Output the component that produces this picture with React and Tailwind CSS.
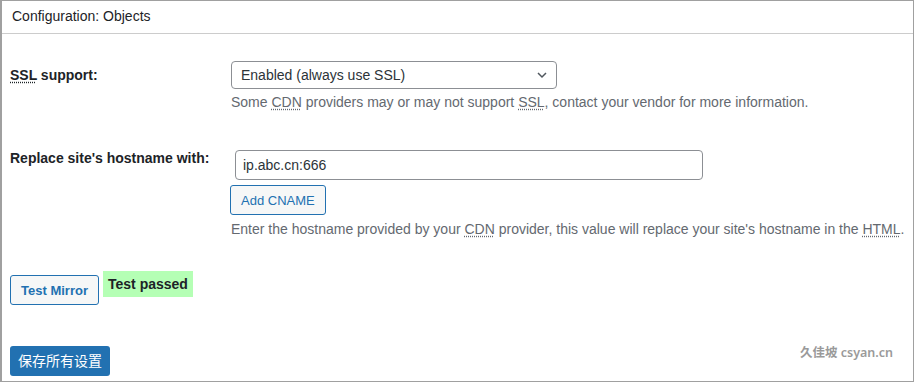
export default function App() {
  return (
    <div className="w-[914px] h-[382px] bg-white font-['Liberation_Sans','Noto_Sans_CJK_SC',sans-serif] text-[14px] leading-[21px] text-[#1d2327]">
      <div className="w-full h-full border border-[#a0a0a0] border-l-2 flex flex-col">
        <div className="h-[33px] shrink-0 border-b border-[#cccccc] pl-[10px] pt-[5px] text-[#1d2327]">
          Configuration: Objects
        </div>

        {/* SSL support */}
        <div className="flex mt-[27px]">
          <div className="w-[229px] pl-[8px] pt-[4px] font-bold">
            <abbr className="underline decoration-dotted underline-offset-2">SSL</abbr> support:
          </div>
          <div className="flex flex-col">
            <div className="w-[326px] h-[28px] border border-[#8c8f94] rounded-[4px] flex items-center justify-between pl-[9px] pr-[8px] text-[#2c3338]">
              <span>Enabled (always use SSL)</span>
              <svg width="12" height="12" viewBox="0 0 12 12" fill="none" stroke="#50575e" strokeWidth="1.5">
                <path d="M2 4l4 4 4-4" />
              </svg>
            </div>
            <div className="mt-[3px] text-[#646970]">
              Some <abbr className="underline decoration-dotted underline-offset-2">CDN</abbr> providers may or may not support <abbr className="underline decoration-dotted underline-offset-2">SSL</abbr>, contact your vendor for more information.
            </div>
          </div>
        </div>

        {/* hostname */}
        <div className="flex mt-[37px]">
          <div className="w-[229px] pl-[8px] -mt-[2px] font-bold">
            Replace site's hostname with:
          </div>
          <div className="flex flex-col">
            <div className="ml-[4px] w-[468px] h-[30px] border border-[#8c8f94] rounded-[4px] flex items-center pl-[7px] text-[#2c3338]">
              ip.abc.cn:666
            </div>
            <div className="mt-[5px] -ml-[1px]">
              <button className="h-[30px] px-[10px] border border-[#2271b1] rounded-[3px] bg-[#f6f7f7] text-[#2271b1] text-[13px]">
                Add CNAME
              </button>
            </div>
            <div className="mt-[4px] text-[#646970]">
              Enter the hostname provided by your <abbr className="underline decoration-dotted underline-offset-2">CDN</abbr> provider, this value will replace your site's hostname in the <abbr className="underline decoration-dotted underline-offset-2">HTML</abbr>.
            </div>
          </div>
        </div>

        {/* test mirror */}
        <div className="flex items-start mt-[31px] pl-[8px]">
          <button className="mt-[4px] h-[30px] w-[89px] border border-[#2271b1] rounded-[3px] bg-[#f6f7f7] text-[#2271b1] text-[13px] font-bold">
            Test Mirror
          </button>
          <span className="ml-[4px] h-[26px] px-[5px] whitespace-nowrap bg-[#b5ffb5] font-bold text-[#1d2327] flex items-center">
            Test passed
          </span>
        </div>

        {/* save */}
        <div className="flex items-end justify-between mt-auto mb-[5px] pl-[8px] pr-[20px]">
          <button className="h-[30px] w-[100px] rounded-[3px] bg-[#2271b1] text-white">
            保存所有设置
          </button>
          <span className="mb-[13px] text-[12.5px] font-semibold text-[#9a9a9a] font-['Noto_Sans','Noto_Sans_CJK_SC',sans-serif]">
            久佳坡 csyan.cn
          </span>
        </div>
      </div>
    </div>
  );
}
